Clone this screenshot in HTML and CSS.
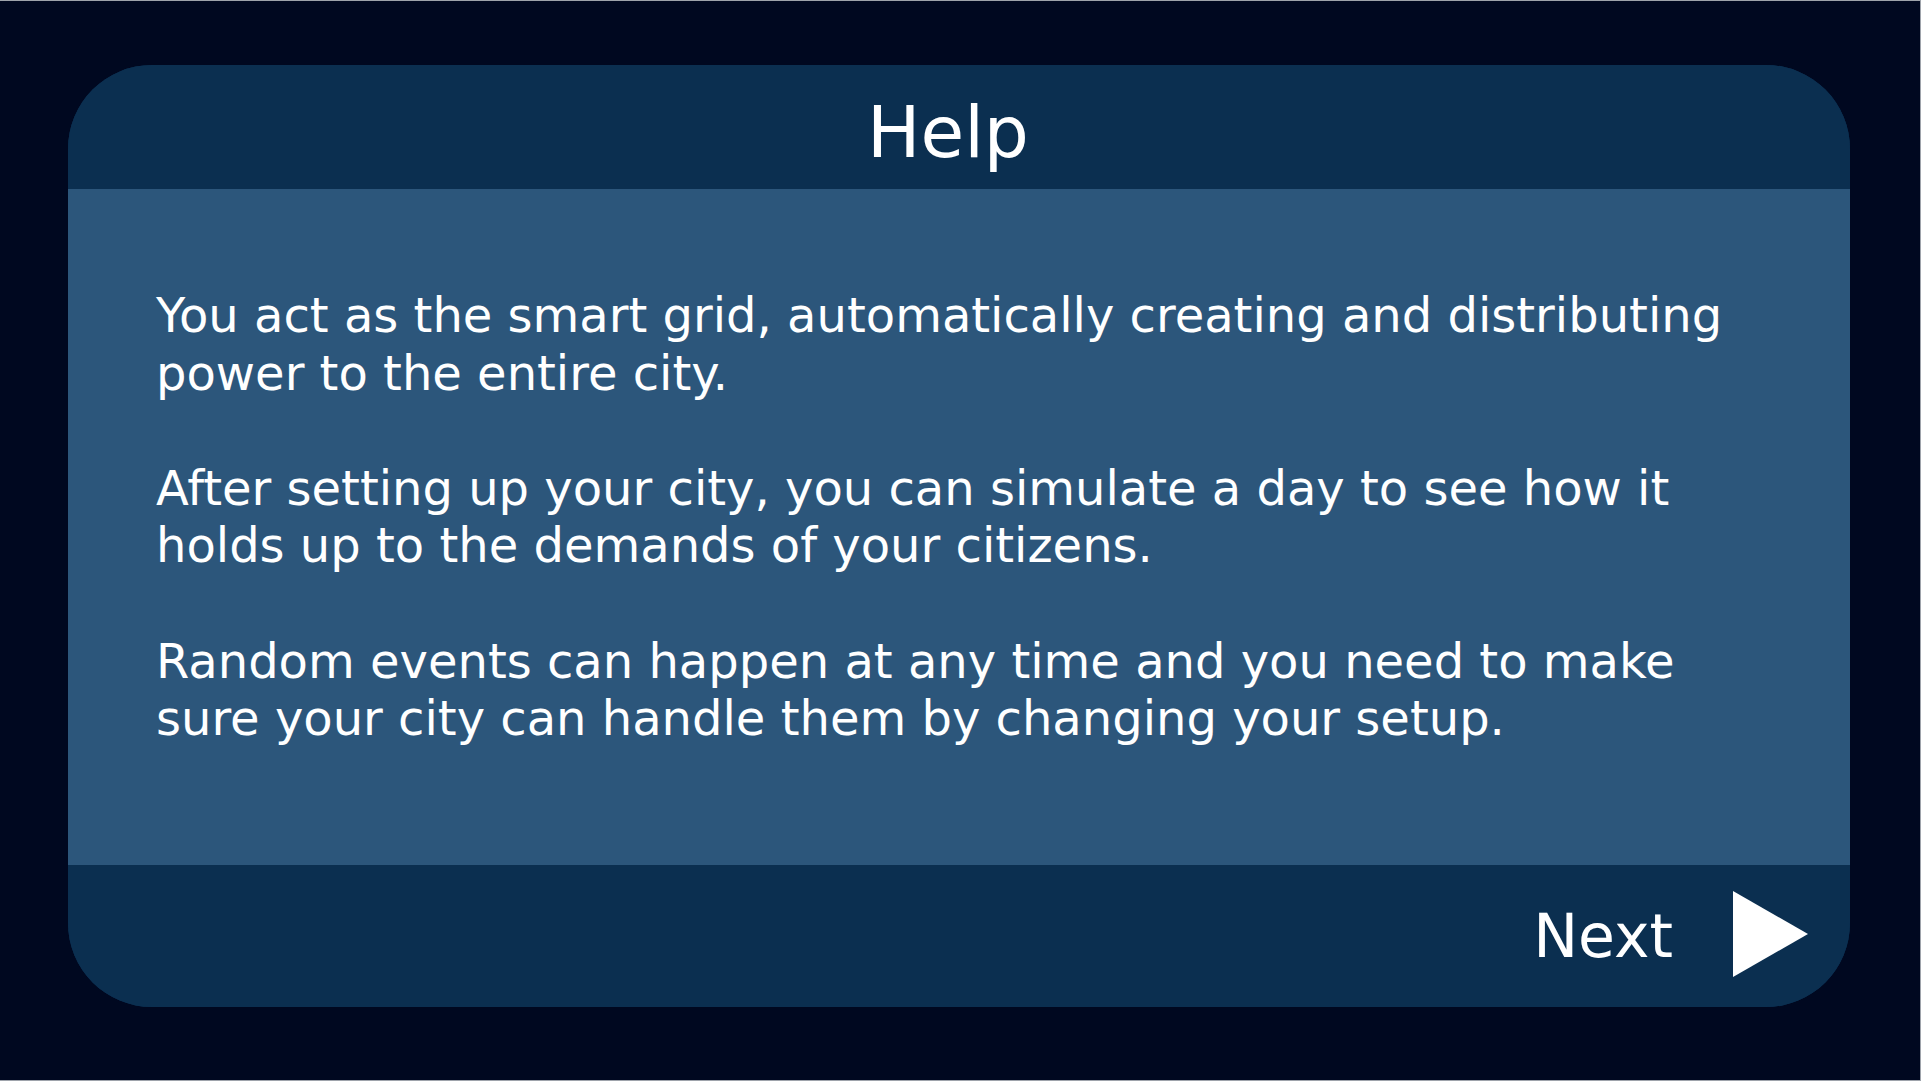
FILE: index.html
```html
<!DOCTYPE html>
<html lang="en">
<head>
<meta charset="utf-8">
<title>Help</title>
<link rel="stylesheet" href="styles.css">
</head>
<body>
<div class="screen">
  <div class="card">
    <div class="card-header">
      <h1 class="title">Help</h1>
    </div>
    <div class="card-body">
      <p class="para">You act as the smart grid, automatically creating and distributing power to the entire city.</p>
      <p class="para">After setting up your city, you can simulate a day to see how it holds up to the demands of your citizens.</p>
      <p class="para">Random events can happen at any time and you need to make sure your city can handle them by changing your setup.</p>
    </div>
    <div class="card-footer">
      <button class="next-btn" type="button">
        <span class="next-label">Next</span>
        <svg class="next-icon" width="75" height="86" viewBox="0 0 75 86" aria-hidden="true">
          <polygon points="0,0 75,43 0,86" fill="#ffffff"/>
        </svg>
      </button>
    </div>
  </div>
</div>
</body>
</html>
```

FILE: styles.css
```css
html {
  margin: 0;
  padding: 0;
  background: #9ea3ab;
}

body {
  margin: 0;
  padding: 1px 0 0 0;
  width: 1921px;
  height: 1080px;
  box-sizing: border-box;
  font-family: "DejaVu Sans", Verdana, sans-serif;
  color: #ffffff;
}

.screen {
  width: 1920px;
  height: 1079px;
  background: #000820;
  box-sizing: border-box;
  padding: 64px 0 0 68px;
}

.card {
  width: 1782px;
  height: 942px;
  border-radius: 84px;
  overflow: hidden;
  display: flex;
  flex-direction: column;
  background: #0b2f50;
}

.card-header {
  height: 124px;
  flex: none;
  box-sizing: border-box;
  padding-right: 22px;
  display: flex;
  align-items: center;
  justify-content: center;
  background: #0b2f50;
}

.title {
  margin: 0;
  font-size: 71px;
  font-weight: normal;
  line-height: 1;
  padding-top: 10px;
}

.card-body {
  height: 676px;
  flex: none;
  box-sizing: border-box;
  padding: 98px 88px 0 88px;
  background: #2c567b;
  display: flex;
  flex-direction: column;
  gap: 57.6px;
}

.para {
  margin: 0;
  font-size: 48px;
  line-height: 57.6px;
}

.card-footer {
  flex: 1;
  display: flex;
  align-items: center;
  justify-content: flex-end;
  box-sizing: border-box;
  padding: 0 42px 4px 0;
  background: #0b2f50;
}

.next-btn {
  display: flex;
  align-items: center;
  gap: 60px;
  background: none;
  border: 0;
  padding: 0;
  color: #ffffff;
  font-family: inherit;
  cursor: pointer;
}

.next-label {
  font-size: 60px;
  line-height: 1;
  padding-top: 4px;
}

.next-icon {
  display: block;
}
```
